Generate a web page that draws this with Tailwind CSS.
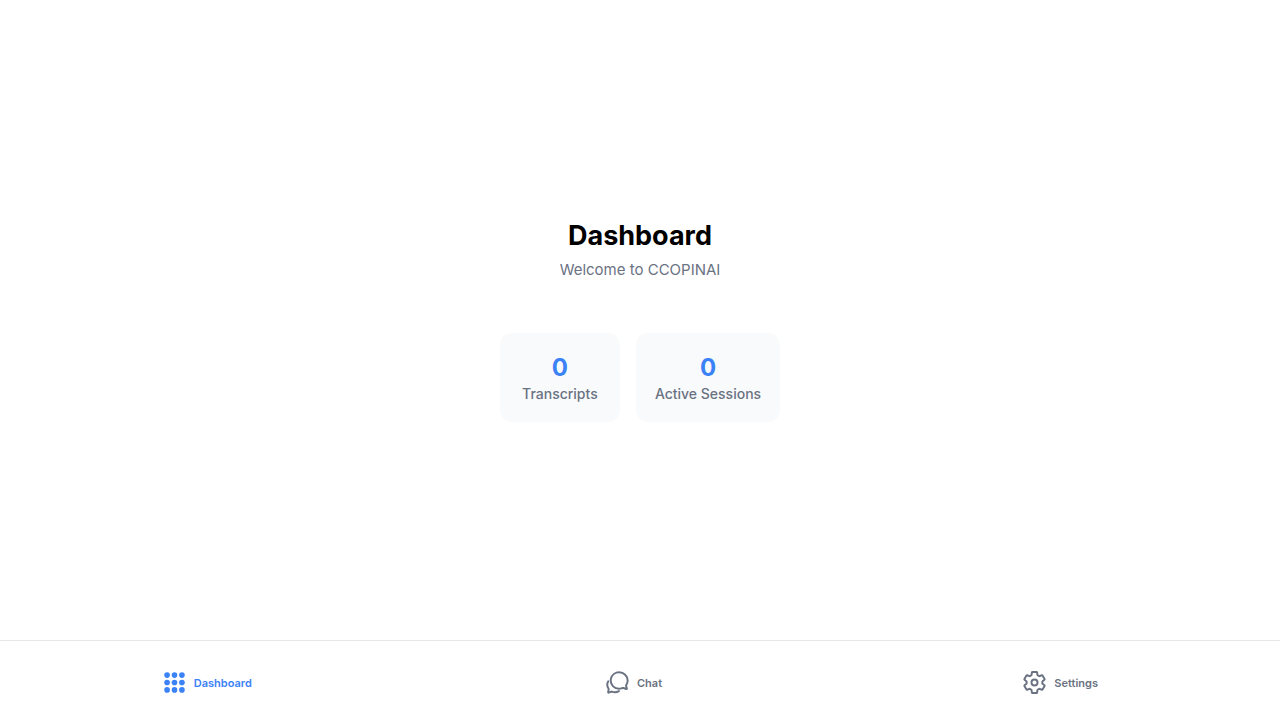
<!DOCTYPE html>
<html lang="en">
<head>
<meta charset="utf-8">
<meta name="viewport" content="width=device-width, initial-scale=1">
<title>Dashboard</title>
<script src="https://cdn.jsdelivr.net/npm/@tailwindcss/browser@4"></script>
</head>
<body class="flex min-h-screen flex-col bg-white font-['Inter',sans-serif]">
<main class="flex flex-1 flex-col items-center justify-center p-5">
  <h1 class="mb-1.5 text-[27px] leading-9 font-bold text-black">Dashboard</h1>
  <p class="mb-[53px] text-[15px] leading-5 text-gray-500">Welcome to CCOPINAI</p>
  <dl class="flex gap-4">
    <div class="flex min-w-[120px] flex-col-reverse items-center gap-1 rounded-xl bg-[#f9fafb] px-[19px] py-5">
      <dt class="text-sm leading-4 font-medium text-gray-500">Transcripts</dt>
      <dd class="text-2xl leading-[29px] font-bold text-[#3b82f6]">0</dd>
    </div>
    <div class="flex min-w-[120px] flex-col-reverse items-center gap-1 rounded-xl bg-[#f9fafb] px-[19px] py-5">
      <dt class="text-sm leading-4 font-medium text-gray-500">Active Sessions</dt>
      <dd class="text-2xl leading-[29px] font-bold text-[#3b82f6]">0</dd>
    </div>
  </dl>
</main>
<nav class="grid h-20 grid-cols-3 border-t border-[#e5e7eb] pt-1 text-[11px] leading-4 font-semibold text-gray-500" aria-label="Main">
  <a href="#dashboard" aria-current="page" class="flex items-center justify-center gap-[7px] pr-[13px] text-[#3b82f6]">
    <svg class="mb-px size-[25px]" viewBox="0 0 512 512" fill="currentColor" aria-hidden="true"><circle cx="104" cy="104" r="58"/><circle cx="256" cy="104" r="58"/><circle cx="408" cy="104" r="58"/><circle cx="104" cy="256" r="58"/><circle cx="256" cy="256" r="58"/><circle cx="408" cy="256" r="58"/><circle cx="104" cy="408" r="58"/><circle cx="256" cy="408" r="58"/><circle cx="408" cy="408" r="58"/></svg>
    <span>Dashboard</span>
  </a>
  <a href="#chat" class="flex items-center justify-center gap-[7px] pr-[13px]">
    <svg class="mb-px size-[25px]" viewBox="0 0 512 512" fill="none" stroke="currentColor" stroke-width="40" stroke-linecap="round" stroke-linejoin="round" aria-hidden="true"><path d="M431 320.6c-1-3.6 1.2-8.6 3.3-12.2a33.68 33.68 0 012.1-3.1A162 162 0 00464 215c.3-92.2-77.5-167-173.7-167-83.9 0-153.9 57.1-170.3 132.9a160.7 160.7 0 00-3.7 34.2c0 92.3 74.8 169.1 171 169.1 15.3 0 35.9-4.6 47.2-7.7s22.5-7.2 25.4-8.3a26.44 26.44 0 019.3-1.7 26 26 0 0110.1 2l56.7 20.1a13.52 13.52 0 003.9 1 8 8 0 008-8 12.85 12.85 0 00-.5-2.7z"/><path d="M66.46 232a146.23 146.23 0 006.39 152.67c2.31 3.49 3.61 6.19 3.21 8s-11.93 61.87-11.93 61.87a8 8 0 002.71 7.68A8.17 8.17 0 0072 464a7.26 7.26 0 002.91-.6l56.21-22a15.7 15.7 0 0112 .2c18.94 7.38 39.88 12 60.83 12A159.21 159.21 0 00284 432.11"/></svg>
    <span>Chat</span>
  </a>
  <a href="#settings" class="flex items-center justify-center gap-[7px] pr-[13px]">
    <svg class="mb-px size-[25px]" viewBox="0 0 512 512" fill="none" stroke="currentColor" stroke-width="40" stroke-linecap="round" stroke-linejoin="round" aria-hidden="true"><circle cx="256" cy="256" r="62"/><path d="M416.39 256a154.34 154.34 0 01-1.53 20.79l45.21 35.46a10.81 10.81 0 012.45 13.75l-42.77 74a10.81 10.81 0 01-13.14 4.59l-44.9-18.08a16.11 16.11 0 00-15.17 1.75A164.48 164.48 0 01325 400.8a15.94 15.94 0 00-8.82 12.14l-6.73 47.89a11.08 11.08 0 01-10.68 9.17h-85.54a11.11 11.11 0 01-10.69-8.87l-6.72-47.82a16.07 16.07 0 00-9-12.22 155.3 155.3 0 01-21.46-12.57 16 16 0 00-15.11-1.71l-44.89 18.07a10.81 10.81 0 01-13.14-4.58l-42.77-74a10.8 10.8 0 012.45-13.75l38.21-30a16.05 16.05 0 006-14.08c-.36-4.17-.58-8.33-.58-12.5s.21-8.27.58-12.35a16 16 0 00-6.07-13.94l-38.19-30A10.81 10.81 0 0149.48 186l42.77-74a10.81 10.81 0 0113.14-4.59l44.9 18.08a16.11 16.11 0 0015.17-1.75A164.48 164.48 0 01187 111.2a15.94 15.94 0 008.82-12.14l6.73-47.89A11.08 11.08 0 01213.23 42h85.54a11.11 11.11 0 0110.69 8.87l6.72 47.82a16.07 16.07 0 009 12.22 155.3 155.3 0 0121.46 12.57 16 16 0 0015.11 1.71l44.89-18.07a10.81 10.81 0 0113.14 4.58l42.77 74a10.8 10.8 0 01-2.45 13.75l-38.21 30a16.05 16.05 0 00-6.05 14.08c.33 4.14.55 8.3.55 12.47z"/></svg>
    <span>Settings</span>
  </a>
</nav>
</body>
</html>
